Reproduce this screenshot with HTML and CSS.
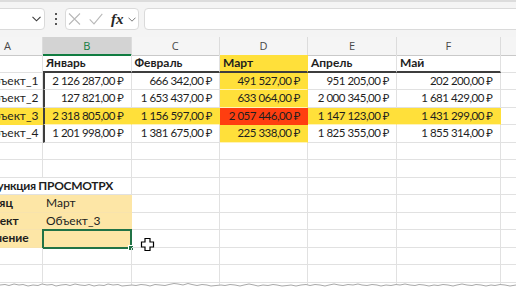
FILE: index.html
```html
<!DOCTYPE html>
<html>
<head>
<meta charset="utf-8">
<title>ПРОСМОТРХ</title>
<link rel="stylesheet" href="styles.css">
</head>
<body>

<div id="app">

	<div id="toolbar">
		<div class="namebox">
			<svg width="9" height="6" viewBox="0 0 9 6"><path d="M0.5 0.8 L4.5 4.8 L8.5 0.8" fill="none" stroke="#3a3a3a" stroke-width="1.1"/></svg>
		</div>
		<div class="grip"><i></i><i></i><i></i></div>
		<div class="fxbox">
			<svg class="ico-x" width="13" height="12" viewBox="0 0 13 12"><path d="M1 0.5 L12 11.5 M12 0.5 L1 11.5" stroke="#b9b9b9" stroke-width="1.1" fill="none"/></svg>
			<svg class="ico-ok" width="14" height="12" viewBox="0 0 14 12"><path d="M0.7 6.3 L5 10.8 L13.3 0.8" stroke="#b9b9b9" stroke-width="1.1" fill="none"/></svg>
			<span class="fx">fx</span>
			<svg class="ico-dd" width="8" height="5" viewBox="0 0 8 5"><path d="M0.5 0.7 L4 4.2 L7.5 0.7" fill="none" stroke="#7a7a7a" stroke-width="1"/></svg>
		</div>
		<div class="formula"></div>
	</div>

	<div id="sheet">
		<div class="row head">
			<div class="ch">A</div>
			<div class="ch sel">B</div>
			<div class="ch">C</div>
			<div class="ch">D</div>
			<div class="ch">E</div>
			<div class="ch">F</div>
			<div class="ch"></div>
		</div>

		<div class="row">
			<div class="c"></div>
			<div class="c b month">Январь</div>
			<div class="c b month">Февраль</div>
			<div class="c b month yel">Март</div>
			<div class="c b month">Апрель</div>
			<div class="c b month">Май</div>
			<div class="c"></div>
		</div>

		<div class="row">
			<div class="c name">Объект_1</div>
			<div class="c num first">2 126 287,00 ₽</div>
			<div class="c num">666 342,00 ₽</div>
			<div class="c num yel">491 527,00 ₽</div>
			<div class="c num">951 205,00 ₽</div>
			<div class="c num">202 200,00 ₽</div>
			<div class="c"></div>
		</div>
		<div class="row">
			<div class="c name">Объект_2</div>
			<div class="c num first">127 821,00 ₽</div>
			<div class="c num">1 653 437,00 ₽</div>
			<div class="c num yel">633 064,00 ₽</div>
			<div class="c num">2 000 345,00 ₽</div>
			<div class="c num">1 681 429,00 ₽</div>
			<div class="c"></div>
		</div>
		<div class="row">
			<div class="c name yel">Объект_3</div>
			<div class="c num first yel">2 318 805,00 ₽</div>
			<div class="c num yel">1 156 597,00 ₽</div>
			<div class="c num red">2 057 446,00 ₽</div>
			<div class="c num yel">1 147 123,00 ₽</div>
			<div class="c num yel">1 431 299,00 ₽</div>
			<div class="c"></div>
		</div>
		<div class="row">
			<div class="c name">Объект_4</div>
			<div class="c num first">1 201 998,00 ₽</div>
			<div class="c num">1 381 675,00 ₽</div>
			<div class="c num yel">225 338,00 ₽</div>
			<div class="c num">1 825 355,00 ₽</div>
			<div class="c num">1 855 314,00 ₽</div>
			<div class="c"></div>
		</div>

		<div class="row">
			<div class="c"></div><div class="c"></div><div class="c"></div><div class="c"></div><div class="c"></div><div class="c"></div><div class="c"></div>
		</div>
		<div class="row">
			<div class="c"></div><div class="c"></div><div class="c"></div><div class="c"></div><div class="c"></div><div class="c"></div><div class="c"></div>
		</div>

		<div class="row">
			<div class="c b wide">Функция ПРОСМОТРХ</div>
			<div class="c"></div><div class="c"></div><div class="c"></div><div class="c"></div><div class="c"></div>
		</div>
		<div class="row">
			<div class="c b tan">Месяц</div>
			<div class="c tan">Март</div>
			<div class="c"></div><div class="c"></div><div class="c"></div><div class="c"></div><div class="c"></div>
		</div>
		<div class="row">
			<div class="c b tan">Объект</div>
			<div class="c tan">Объект_3</div>
			<div class="c"></div><div class="c"></div><div class="c"></div><div class="c"></div><div class="c"></div>
		</div>
		<div class="row">
			<div class="c b tan">Значение</div>
			<div class="c tan active"><span class="handle"></span></div>
			<div class="c"></div><div class="c"></div><div class="c"></div><div class="c"></div><div class="c"></div>
		</div>

		<div class="row">
			<div class="c"></div><div class="c"></div><div class="c"></div><div class="c"></div><div class="c"></div><div class="c"></div><div class="c"></div>
		</div>
		<div class="row">
			<div class="c"></div><div class="c"></div><div class="c"></div><div class="c"></div><div class="c"></div><div class="c"></div><div class="c"></div>
		</div>
		<div class="row">
			<div class="c"></div><div class="c"></div><div class="c"></div><div class="c"></div><div class="c"></div><div class="c"></div><div class="c"></div>
		</div>
	</div>

	<!-- excel fat cross cursor -->
	<svg class="cursor" width="15" height="15" viewBox="0 0 15 15">
		<path d="M5 1.5 H10 V5 H13.5 V10 H10 V13.5 H5 V10 H1.5 V5 H5 Z" fill="#fff" stroke="#000" stroke-width="1.2"/>
	</svg>

	<!-- torn paper edge -->
	<svg class="tear" width="516" height="9" viewBox="0 0 516 9">
		<path d="M0 4 L5 3.5 L9 4.5 L14 3 L19 4 L23 3.5 L28 5 L33 4 L38 4.5 L42 3 L47 4 L52 3.5 L56 5 L61 4 L66 3.5 L70 4.5 L75 3 L80 4 L85 4.5 L89 3.5 L94 5 L99 4 L104 4.5 L108 3 L113 4 L118 3.5 L122 5 L127 4.5 L132 4 L136 4.5 L141 3.5 L146 4 L150 5 L155 3.5 L160 4 L165 4.5 L169 3.5 L174 2.5 L178 3 L183 4 L188 2.5 L192 3.5 L197 4.5 L202 3.5 L207 4 L211 5 L216 4.5 L221 4 L225 4.5 L230 3.5 L235 4 L240 5 L244 4 L249 3 L254 4 L258 5 L263 4 L268 4.5 L273 3.5 L277 4 L282 5 L287 4.5 L291 4 L296 5 L301 4 L306 3.5 L310 4.5 L315 3.5 L320 4 L325 5 L329 4 L334 3 L339 4 L343 4.5 L348 3.5 L353 4 L358 3 L362 4 L367 4.5 L372 3.5 L377 4 L381 5 L386 4 L391 4.5 L396 3.5 L400 4 L405 3 L410 4 L415 4.5 L419 3.5 L424 4 L429 5 L434 4 L438 4.5 L443 3.5 L448 4 L453 5 L457 4 L462 3 L467 4 L472 4.5 L476 3.5 L481 4 L486 5 L491 4 L495 4.5 L500 3.5 L505 4 L510 5 L516 4 L516 9 L0 9 Z" fill="#fff" stroke="none"/>
		<path d="M0 4 L5 3.5 L9 4.5 L14 3 L19 4 L23 3.5 L28 5 L33 4 L38 4.5 L42 3 L47 4 L52 3.5 L56 5 L61 4 L66 3.5 L70 4.5 L75 3 L80 4 L85 4.5 L89 3.5 L94 5 L99 4 L104 4.5 L108 3 L113 4 L118 3.5 L122 5 L127 4.5 L132 4 L136 4.5 L141 3.5 L146 4 L150 5 L155 3.5 L160 4 L165 4.5 L169 3.5 L174 2.5 L178 3 L183 4 L188 2.5 L192 3.5 L197 4.5 L202 3.5 L207 4 L211 5 L216 4.5 L221 4 L225 4.5 L230 3.5 L235 4 L240 5 L244 4 L249 3 L254 4 L258 5 L263 4 L268 4.5 L273 3.5 L277 4 L282 5 L287 4.5 L291 4 L296 5 L301 4 L306 3.5 L310 4.5 L315 3.5 L320 4 L325 5 L329 4 L334 3 L339 4 L343 4.5 L348 3.5 L353 4 L358 3 L362 4 L367 4.5 L372 3.5 L377 4 L381 5 L386 4 L391 4.5 L396 3.5 L400 4 L405 3 L410 4 L415 4.5 L419 3.5 L424 4 L429 5 L434 4 L438 4.5 L443 3.5 L448 4 L453 5 L457 4 L462 3 L467 4 L472 4.5 L476 3.5 L481 4 L486 5 L491 4 L495 4.5 L500 3.5 L505 4 L510 5 L516 4" fill="none" stroke="#a9a9a9" stroke-width="1"/>
	</svg>

</div>

</body>
</html>
```

FILE: styles.css
```css
* { box-sizing: border-box; }

body {
	margin: 0;
	background: #fff;
	font: 12px Lato, "Noto Sans", sans-serif;
	color: #1e1e1e;
	overflow: hidden;
}

#app {
	position: relative;
	width: 516px;
	height: 290px;
	overflow: hidden;
}

/* formula bar */
#toolbar {
	display: flex;
	align-items: flex-start;
	height: 37px;
	padding-top: 6px;
	background: #f4f4f4;
	border-top: 2px solid #dcdcdc;
}

.namebox {
	display: flex;
	align-items: center;
	justify-content: flex-end;
	width: 55px;
	height: 22px;
	margin-left: -10px;
	padding-right: 3px;
	background: #fff;
	border: 1px solid #dadada;
	border-radius: 4px;
}

.grip {
	display: flex;
	flex-direction: column;
	gap: 3px;
	margin: 5px 0 0 10px;
}
.grip i {
	display: block;
	width: 2px;
	height: 2px;
	background: #555;
}

.fxbox {
	display: flex;
	align-items: center;
	width: 74px;
	height: 22px;
	margin-left: 8px;
	padding-left: 2px;
	background: #fff;
	border: 1px solid #dadada;
	border-radius: 4px;
}
.ico-ok { margin-left: 8px; }
.fx {
	margin-left: 8px;
	width: 14px;
	font: italic 600 15px "Liberation Serif", serif;
	color: #262626;
	line-height: 20px;
}
.ico-dd { margin-left: 3px; }

.formula {
	flex: 1;
	height: 22px;
	margin: 0 -10px 0 5px;
	background: #fff;
	border: 1px solid #dadada;
	border-radius: 4px;
}

/* grid */
#sheet {
	margin-left: -27px;
	width: 600px;
}

.row {
	display: grid;
	grid-template-columns: 70px 88.5px 88.5px 88px 89px 103.5px 72.5px;
	height: 17.5px;
}

.row.head { height: 18px; }

.ch {
	text-align: center;
	font: 11px "Open Sans", sans-serif;
	line-height: 17px;
	color: #484848;
	background: #f5f5f5;
	border-right: 1px solid #dcdcdc;
	border-bottom: 1px solid #c9c9c9;
}
.ch.sel {
	background: #d3d3d3;
	color: #107c41;
	border-bottom: 2px solid #107c41;
}

.c {
	position: relative;
	padding: 0 3px;
	line-height: 16.5px;
	white-space: nowrap;
	overflow: hidden;
	border-right: 1px solid #e1e1e1;
	border-bottom: 1px solid #e1e1e1;
}

.b { font-weight: 700; }

.name { padding-left: 11px; }

.num {
	text-align: right;
	padding-left: 0;
	padding-right: 7px;
	font-size: 11.5px;
	letter-spacing: -0.5px;
}

.month {
	border-bottom: 2px solid #3d3d3d;
}

.first {
	border-left: 2px solid #3d3d3d;
}

.wide {
	grid-column: span 2;
	overflow: visible;
	padding-left: 15px;
	letter-spacing: -0.3px;
}

.yel {
	background: #ffe03a;
	border-right-color: #ffe03a;
	border-bottom-color: #ffe03a;
}
.month.yel { border-bottom-color: #3d3d3d; }

.num.yel { border-bottom-color: #fff3b8; }

.red {
	background: #ff3e10;
	border-right-color: #ff3e10;
	border-bottom-color: #ff3e10;
}

.tan {
	background: #fde6a6;
	border-right-color: #fde6a6;
	border-bottom-color: #f8e3ad;
}

.active {
	overflow: visible;
	border: 2px solid #217346;
	margin: -1px 0 -1px -1px;
}
.handle {
	position: absolute;
	right: -4px;
	bottom: -4px;
	width: 6px;
	height: 6px;
	background: #217346;
	border: 1px solid #fff;
}

.cursor {
	position: absolute;
	left: 140px;
	top: 237px;
}

.tear {
	position: absolute;
	left: 0;
	top: 281px;
}
```
